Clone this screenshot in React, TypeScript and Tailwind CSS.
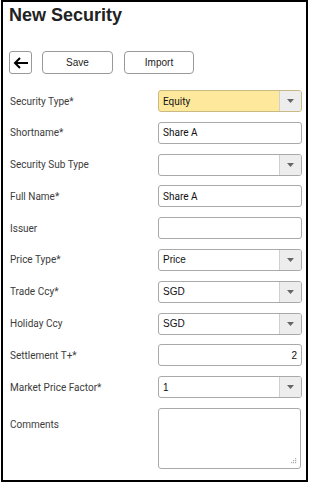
import React from "react";

const Arrow = () => (
  <div className="w-[22px] h-full bg-[#ededed] border-l border-[#cfcfcf] flex items-center justify-center">
    <svg width="7" height="4" viewBox="0 0 7 4"><path d="M0 0H7L3.5 4Z" fill="#666" /></svg>
  </div>
);

type Row = { label: string; kind: "select" | "input" | "textarea"; value?: string; yellow?: boolean; right?: boolean; arial?: boolean };

const rows: Row[] = [
  { label: "Security Type*", kind: "select", value: "Equity", yellow: true },
  { label: "Shortname*", kind: "input", value: "Share A" },
  { label: "Security Sub Type", kind: "select", value: "" },
  { label: "Full Name*", kind: "input", value: "Share A" },
  { label: "Issuer", kind: "input", value: "" },
  { label: "Price Type*", kind: "select", value: "Price", arial: true },
  { label: "Trade Ccy*", kind: "select", value: "SGD", arial: true },
  { label: "Holiday Ccy", kind: "select", value: "SGD", arial: true },
  { label: "Settlement T+*", kind: "input", value: "2", right: true, arial: true },
  { label: "Market Price Factor*", kind: "select", value: "1", arial: true },
];

export default function App() {
  return (
    <div className="w-[311px] h-[484px] bg-white">
      <div
        className="ml-px w-[307px] h-[482px] border-2 border-black flex flex-col"
        style={{ fontFamily: "Roboto, 'Liberation Sans', sans-serif" }}
      >
        <div
          className="pl-[6px] pt-[2px] text-[18px] font-bold text-[#222] leading-[22px]"
          style={{ fontFamily: "'Liberation Sans', Arial, sans-serif" }}
        >
          New Security
        </div>
        <div className="flex items-center mt-[25px] pl-[6px] h-[23px]">
          <div className="w-[23px] h-[23px] border border-[#999] rounded-[3px] flex items-center justify-center">
            <svg width="16" height="12" viewBox="0 0 16 12">
              <path d="M15 6H2M7 1L2 6L7 11" stroke="#000" strokeWidth="2" fill="none" />
            </svg>
          </div>
          <div className="ml-[10px] w-[71px] h-[23px] border border-[#999] rounded-[4px] flex items-center justify-center text-[10px] text-[#222]" style={{ fontFamily: "'Liberation Sans', Arial, sans-serif" }}>
            Save
          </div>
          <div className="ml-[11px] w-[70px] h-[23px] border border-[#999] rounded-[4px] flex items-center justify-center text-[10px] text-[#222]" style={{ fontFamily: "'Liberation Sans', Arial, sans-serif" }}>
            Import
          </div>
        </div>
        <div className="flex flex-col gap-[9.8px] mt-[16px]">
          {rows.map((r) => (
            <div key={r.label} className="flex items-center h-[22px]">
              <div className="w-[155px] pl-[7px] text-[10px] text-[#3c3c3c]">{r.label}</div>
              <div
                className={`w-[144px] h-[22px] border rounded-[3px] flex items-center overflow-hidden ${
                  r.yellow ? "bg-[#fde89c] border-[#c9ba84]" : "bg-white border-[#a9a9a9]"
                }`}
              >
                <div
                  className={`flex-1 px-[4px] text-[10px] text-[#111] ${r.right ? "text-right" : ""}`}
                  style={r.arial ? { fontFamily: "'Liberation Sans', Arial, sans-serif" } : undefined}
                >
                  {r.value}
                </div>
                {r.kind === "select" && <Arrow />}
              </div>
            </div>
          ))}
          <div className="flex items-start h-[61px]">
            <div className="w-[155px] pl-[7px] text-[10px] text-[#3c3c3c] pt-[9px]">Comments</div>
            <div className="relative w-[143px] h-[61px] border border-[#a9a9a9] rounded-[3px] bg-white">
              <svg className="absolute right-[3px] bottom-[3px]" width="7" height="7" viewBox="0 0 7 7">
                <rect x="5" y="0" width="1.2" height="1.2" fill="#aaa" />
                <rect x="3" y="2" width="1.2" height="1.2" fill="#aaa" />
                <rect x="5" y="2" width="1.2" height="1.2" fill="#aaa" />
                <rect x="1" y="4" width="1.2" height="1.2" fill="#aaa" />
                <rect x="3" y="4" width="1.2" height="1.2" fill="#aaa" />
                <rect x="5" y="4" width="1.2" height="1.2" fill="#aaa" />
              </svg>
            </div>
          </div>
        </div>
      </div>
    </div>
  );
}
